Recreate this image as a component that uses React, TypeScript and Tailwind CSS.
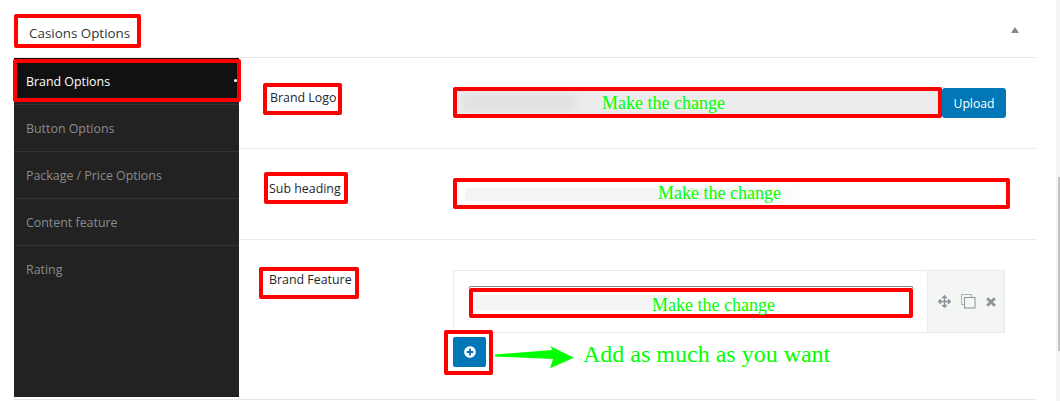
import { FaArrowsAlt, FaPlusCircle } from 'react-icons/fa';

const SIDE_ITEMS = ['Button Options', 'Package / Price Options', 'Content feature', 'Rating'];

function ChangeNote({ className }: { className: string }) {
  return (
    <span className={`absolute font-['Liberation_Serif',serif] text-[18px] leading-none text-[#00ff00] ${className}`}>
      Make the change
    </span>
  );
}

function FieldLabel({ text, className }: { text: string; className: string }) {
  return (
    <div className={`box-border rounded-[2px] border-4 border-[#ff0000] text-[12.4px] font-medium text-[#23282d] ${className}`}>
      {text}
    </div>
  );
}

export default function App() {
  return (
    <div className="relative h-[401px] w-[1060px] overflow-hidden bg-white font-['Open_Sans',sans-serif]">
      <div className="ml-[14px] w-[1022px]">
        {/* Panel header */}
        <div className="flex h-[58px] items-start justify-between border-b border-[#e5e5e5] pt-[14px]">
          <div className="box-border flex h-[34px] w-[127px] items-center rounded-[2px] border-4 border-[#ff0000] pl-[11px] pt-[5px] text-[13.4px] font-medium text-[#32373c]">
            Casions Options
          </div>
          <div className="mr-[17px] mt-[13px] h-0 w-0 border-x-[4px] border-b-[6px] border-x-transparent border-b-[#7e8a94]" />
        </div>

        <div className="flex h-[342px] border-b border-[#e5e5e5]">
          {/* Side tabs */}
          <div className="h-[339px] w-[225px] shrink-0 bg-[#222222]">
            <div className="h-px bg-[#111111]" />
            <div className="relative z-10 -ml-px box-border flex h-[43px] w-[228px] items-center rounded-[2px] border-4 border-[#ff0000] bg-[#111111] pl-[9px] pt-[3px] text-[12.4px] font-medium text-white">
              Brand Options
              <span className="absolute right-0 top-[16px] h-[3px] w-[3px] rounded-full bg-white" />
            </div>
            <div className="h-[3px] border-b border-[#333333]" />
            {SIDE_ITEMS.map((item, i) => (
              <div
                key={item}
                className={`box-border flex h-[47px] items-center pl-[12px] pt-[2px] text-[12.4px] text-[#8b8b8b] ${i < 3 ? 'border-b border-[#333333]' : ''}`}
              >
                {item}
              </div>
            ))}
          </div>

          <div className="flex-1">
            {/* Brand logo */}
            <div className="flex h-[91px] border-b border-[#ebebeb]">
              <div className="w-[214px] pt-[25px] pl-[24px]">
                <FieldLabel text="Brand Logo" className="h-[32px] w-[79px] pl-[3px] pt-[1px] leading-[20px]" />
              </div>
              <div className="flex pt-[29px]">
                <div className="relative box-border h-[31px] w-[489px] overflow-hidden rounded-[2px] border-4 border-[#ff0000] bg-[#ececec]">
                  <div className="absolute left-[5px] top-[3px] h-[17px] w-[115px] rounded-[6px] bg-[#e1e2e4] blur-[2px]" />
                  <ChangeNote className="left-[145px] top-[3px]" />
                </div>
                <button className="mt-px h-[30px] w-[64px] rounded-[3px] bg-[#0277b8] pt-[2px] text-[12.2px] text-white">Upload</button>
              </div>
            </div>

            {/* Sub heading */}
            <div className="flex h-[91px] border-b border-[#ebebeb]">
              <div className="w-[214px] pt-[23px] pl-[25px]">
                <FieldLabel text="Sub heading" className="h-[32px] w-[84px] pl-[1px] pt-[3px] leading-[20px]" />
              </div>
              <div className="pt-[29px]">
                <div className="relative box-border h-[31px] w-[557px] rounded-[2px] border-4 border-[#ff0000] bg-white">
                  <div className="absolute left-[8px] top-[6px] h-[13px] w-[339px] bg-gradient-to-r from-[#f3f4f4] from-85% to-white" />
                  <ChangeNote className="left-[201px] top-[2px]" />
                </div>
              </div>
            </div>

            {/* Brand feature */}
            <div className="flex">
              <div className="w-[214px] pt-[27px] pl-[20px]">
                <FieldLabel text="Brand Feature" className="h-[32px] w-[100px] pl-[6px] leading-[18px]" />
              </div>
              <div className="pt-[30px]">
                <div className="box-border flex h-[63px] w-[552px] border border-[#e9eaea]">
                  <div className="flex-1 pl-[15px] pt-[15px]">
                    <div className="h-[2px] w-[444px] rounded-t-[3px] border-x border-t border-[#7c868c]" />
                    <div className="relative box-border h-[30px] w-[444px] rounded-[2px] border-4 border-[#ff0000] bg-white">
                      <div className="absolute left-[2px] top-[3px] h-[15px] w-[195px] bg-[#f3f4f4]" />
                      <ChangeNote className="left-[179px] top-[4px]" />
                    </div>
                  </div>
                  <div className="flex w-[77px] items-center border-l border-[#e9eaea] bg-[#f4f5f5] pl-[10px]">
                    <FaArrowsAlt className="h-[13px] w-[13px] text-[#8e9499]" />
                    <svg viewBox="0 0 15 15" className="ml-[10px] h-[15px] w-[15px]" fill="none">
                      <rect x="0.5" y="0.5" width="10" height="10" stroke="#a8b6c2" />
                      <rect x="3.5" y="3.5" width="10.5" height="10.5" fill="#f4f5f5" stroke="#8e9499" />
                    </svg>
                    <svg viewBox="0 0 10 10" className="ml-[10px] h-[10px] w-[10px]">
                      <path d="M1.2 1.2 L8.8 8.8 M8.8 1.2 L1.2 8.8" stroke="#8e9499" strokeWidth="2.8" />
                    </svg>
                  </div>
                </div>

                <div className="-ml-[9px] -mt-[3px] flex items-start">
                  <div className="box-border flex h-[45px] w-[49px] items-center justify-center rounded-[2px] border-[4px] border-[#ff0000]">
                    <div className="-mt-px ml-[2px] flex h-[30px] w-[33px] items-center justify-center rounded-[2px] bg-[#0277b8]">
                      <FaPlusCircle className="h-[12px] w-[12px] text-white" />
                    </div>
                  </div>
                  <svg viewBox="0 0 80 24" className="ml-[2px] mt-[16px] h-[24px] w-[80px]">
                    <polygon points="0,8.5 57.5,4 55,0 79,11.7 55,22.3 58,13 0,10.5" fill="#00ff00" />
                  </svg>
                  <span className="ml-[8px] mt-[12px] font-['Liberation_Serif',serif] text-[24px] leading-none text-[#00ff00]">
                    Add as much as you want
                  </span>
                </div>
              </div>
            </div>
          </div>
        </div>
      </div>

      {/* Page scrollbar */}
      <div className="absolute right-0 top-0 h-full w-[4px] bg-[#f5f5f5]">
        <div className="ml-[2px] mt-[177px] h-[174px] w-[2px] bg-[#c4c4c4]" />
      </div>
    </div>
  );
}
